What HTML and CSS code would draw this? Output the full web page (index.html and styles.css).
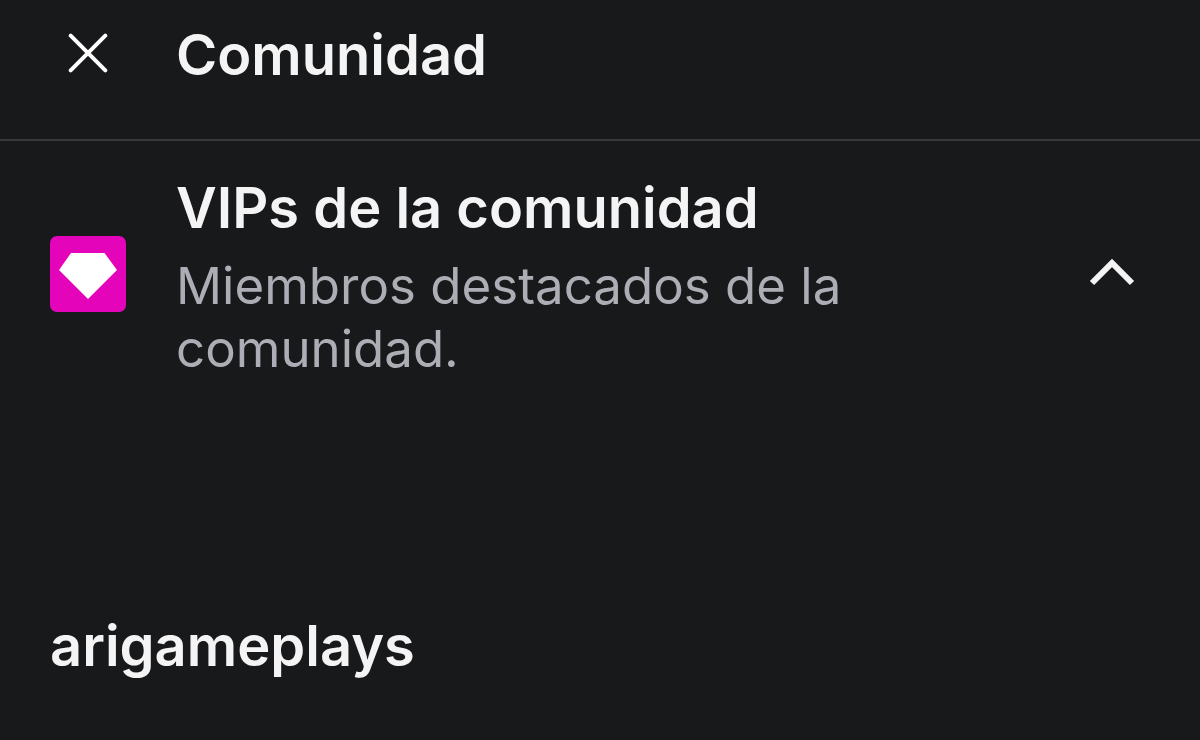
FILE: index.html
```html
<!DOCTYPE html>
<html lang="es">
<head>
<meta charset="utf-8">
<meta name="viewport" content="width=device-width, initial-scale=1">
<title>Comunidad</title>
<link rel="stylesheet" href="styles.css">
</head>
<body>
<header class="header">
  <button class="icon-button" type="button" aria-label="Cerrar">
    <svg class="close-icon" viewBox="0 0 40 44" aria-hidden="true"><path d="M2.7 2.7 37.3 37.3M37.3 2.7 2.7 37.3"/></svg>
  </button>
  <h1 class="title">Comunidad</h1>
</header>
<main>
  <section class="group">
    <svg class="badge" viewBox="0 0 76 76" aria-hidden="true"><rect width="76" height="76" rx="7" fill="#e404b9"/><path d="M21 17H54.500L67 34 38 63 9 34Z" fill="#fff"/></svg>
    <div class="copy">
      <h2 class="title">VIPs de la comunidad</h2>
      <p class="description">Miembros destacados de la comunidad.</p>
    </div>
    <button class="icon-button" type="button" aria-label="Contraer VIPs" aria-expanded="true">
      <svg class="chevron" viewBox="0 0 46 32" aria-hidden="true"><path d="M3 25 23 5 43 25"/></svg>
    </button>
  </section>
  <ul class="members"><li class="title">arigameplays</li></ul>
</main>
</body>
</html>
```
FILE: styles.css
```css
* { box-sizing: border-box; }
body {
  margin: 0;
  min-height: 100vh;
  background: #18191b;
  color: #f4f4f5;
  font-family: Inter, sans-serif;
}
.header {
  display: grid;
  grid-template-columns: 76px 1fr;
  column-gap: 50px;
  align-items: center;
  padding: 19px 50px 48px;
  border-bottom: 2px solid #38383b;
}
.icon-button {
  display: flex;
  justify-content: center;
  align-items: center;
  padding: 0;
  border: 0;
  background: none;
  color: inherit;
  cursor: pointer;
}
.close-icon { width: 40px; height: 44px; }
.close-icon path {
  fill: none;
  stroke: #fff;
  stroke-width: 4;
  stroke-linecap: round;
}
.title {
  margin: 0;
  font-size: 56px;
  line-height: 72px;
  font-weight: 600;
}
.group {
  display: grid;
  grid-template-columns: 76px 1fr 46px;
  column-gap: 50px;
  align-items: center;
  padding: 27px 65px 28px 50px;
}
.badge { width: 76px; height: 76px; }
.copy {
  max-width: 700px;
  padding-top: 4px;
}
.description {
  margin: 0;
  padding-top: 10px;
  color: #adadb5;
  font-size: 51px;
  line-height: 63px;
}
.chevron { width: 46px; height: 32px; }
.chevron path { fill: none; stroke: currentColor; stroke-width: 6; }
.members {
  margin: 0;
  padding: 202px 50px 58px;
  list-style: none;
}
```
